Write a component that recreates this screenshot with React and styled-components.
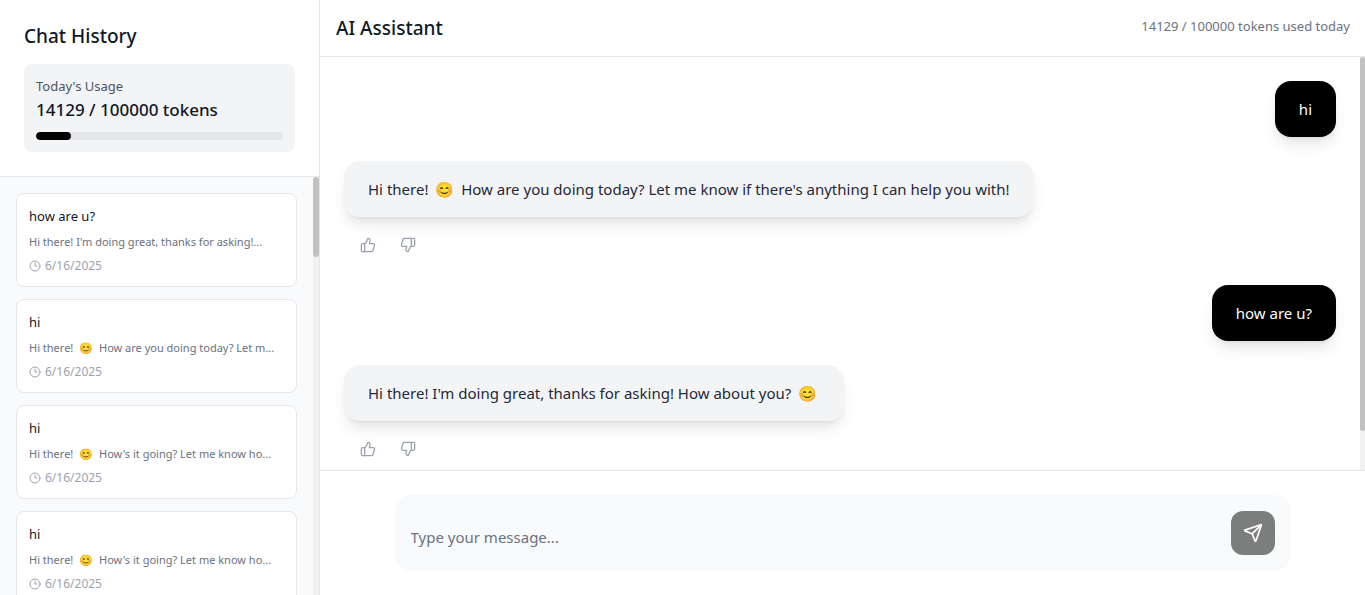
import React from "react";
import styled, { createGlobalStyle } from "styled-components";
import { Clock3, Send, ThumbsDown, ThumbsUp } from "lucide-react";

const GlobalStyle = createGlobalStyle`
  *, *::before, *::after { box-sizing: border-box; }
  body {
    margin: 0;
    background: #fff;
    color: #111827;
    font-family: "Segoe UI", "Noto Sans", "Open Sans", sans-serif;
    font-size: 15px;
  }
  h1, h2, h3, p, ul { margin: 0; padding: 0; }
  button, textarea { font: inherit; border: 0; background: none; padding: 0; }
`;

const Layout = styled.div`
  display: flex;
  height: 100vh;
  overflow: hidden;
`;

const Sidebar = styled.aside`
  display: flex;
  flex-direction: column;
  flex: 0 0 320px;
  min-height: 0;
  border-right: 1px solid #e5e7eb;
  background: #f9fafb;
`;

const SidebarHeader = styled.header`
  flex: none;
  padding: 24px;
  background: #fff;
  border-bottom: 1px solid #e5e7eb;
`;

const Title = styled.h2`
  font-size: 19px;
  font-weight: 500;
  line-height: 24px;
`;

const UsageCard = styled.section`
  margin-top: 16px;
  padding: 12px;
  border-radius: 8px;
  background: #f3f4f6;
`;

const UsageLabel = styled.p`
  color: #4b5563;
  font-size: 13px;
  line-height: 20px;
`;

const UsageValue = styled.p`
  font-size: 17px;
  font-weight: 500;
  line-height: 28px;
`;

const Meter = styled.div`
  height: 8px;
  margin-top: 8px;
  border-radius: 4px;
  background: #e5e7eb;
  overflow: hidden;
`;

const MeterFill = styled.div`
  height: 100%;
  border-radius: 4px;
  background: #000;
`;

const ScrollArea = styled.div`
  display: flex;
  flex: 1;
  min-height: 0;
  overflow: hidden;
`;

const ScrollTrack = styled.div`
  flex: 0 0 ${(p) => p.$width}px;
  background: #f1f1f1;
`;

const ScrollThumb = styled.div`
  height: ${(p) => p.$height};
  border-radius: 3px;
  background: #c1c1c1;
`;

const HistoryList = styled.ul`
  display: flex;
  flex: 1;
  flex-direction: column;
  gap: 12px;
  min-width: 0;
  padding: 16px;
  list-style: none;
`;

const HistoryCard = styled.button`
  display: flex;
  flex-direction: column;
  gap: 8px;
  width: 100%;
  padding: 12px;
  border: 1px solid #e5e7eb;
  border-radius: 8px;
  background: #fff;
  text-align: left;
  cursor: pointer;
`;

const HistoryTitle = styled.span`
  color: #111827;
  font-size: 13px;
  line-height: 20px;
`;

const HistoryPreview = styled.span`
  width: 100%;
  overflow: hidden;
  color: #6b7280;
  font-size: 11px;
  line-height: 16px;
  text-overflow: ellipsis;
  white-space: nowrap;
`;

const HistoryDate = styled.span`
  display: flex;
  align-items: center;
  gap: 4px;
  color: #9ca3af;
  font-size: 12px;
  line-height: 16px;
`;

const Emoji = styled.span`
  margin: 0 3px;
`;

const Main = styled.main`
  display: flex;
  flex: 1;
  flex-direction: column;
  min-width: 0;
`;

const MainHeader = styled.header`
  display: flex;
  flex: none;
  align-items: flex-start;
  justify-content: space-between;
  padding: 16px 15px 16px 16px;
  border-bottom: 1px solid #e5e7eb;
`;

const TokenCount = styled.span`
  color: #6b7280;
  font-size: 13px;
  line-height: 20px;
`;

const Messages = styled.div`
  display: flex;
  flex: 1;
  flex-direction: column;
  gap: 24px;
  min-width: 0;
  padding: 24px;
`;

const Message = styled.div`
  display: flex;
  flex-direction: column;
  align-items: ${(p) => (p.$own ? "flex-end" : "flex-start")};
`;

const Bubble = styled.p`
  padding: 16px 24px;
  border-radius: 16px;
  background: ${(p) => (p.$own ? "#000" : "#f3f4f6")};
  color: ${(p) => (p.$own ? "#fff" : "#1f2937")};
  line-height: 24px;
  box-shadow: 0 10px 15px -3px rgba(0, 0, 0, 0.1), 0 4px 6px -4px rgba(0, 0, 0, 0.1);
`;

const Feedback = styled.div`
  display: flex;
  gap: 8px;
  padding: 12px 8px 0;
`;

const FeedbackButton = styled.button`
  display: flex;
  padding: 8px;
  border-radius: 8px;
  color: #9ca3af;
  cursor: pointer;
`;

const ComposerBar = styled.footer`
  flex: none;
  padding: 24px;
  border-top: 1px solid #e5e7eb;
`;

const Composer = styled.form`
  display: flex;
  gap: 16px;
  max-width: 896px;
  margin: 0 auto;
  padding: 16px;
  border-radius: 16px;
  background: #f9fafb;
`;

const MessageInput = styled.textarea`
  flex: 1;
  height: 44px;
  padding: 14px 0 0;
  color: #111827;
  line-height: 24px;
  outline: none;
  overflow: hidden;
  resize: none;
  &::placeholder { color: #6b7280; opacity: 1; }
`;

const SendButton = styled.button`
  display: flex;
  align-items: center;
  justify-content: center;
  width: 44px;
  height: 44px;
  border-radius: 12px;
  background: #7c7d7d;
  color: #fff;
`;

const USED = 14129;
const LIMIT = 100000;

const history = [
  { title: "how are u?", preview: "Hi there! I'm doing great, thanks for asking!..." },
  { title: "hi", preview: "Hi there! 😊 How are you doing today? Let m..." },
  { title: "hi", preview: "Hi there! 😊 How's it going? Let me know ho..." },
  { title: "hi", preview: "Hi there! 😊 How's it going? Let me know ho..." },
];

const messages = [
  { own: true, text: "hi" },
  { own: false, text: "Hi there! 😊 How are you doing today? Let me know if there's anything I can help you with!" },
  { own: true, text: "how are u?" },
  { own: false, text: "Hi there! I'm doing great, thanks for asking! How about you? 😊" },
];

function RichText({ text }) {
  return text
    .split(/(😊)/u)
    .map((part, i) => (part === "😊" ? <Emoji key={i}>{part}</Emoji> : part));
}

function Scrollbar({ width, height }) {
  return (
    <ScrollTrack $width={width} aria-hidden="true">
      <ScrollThumb $height={height} />
    </ScrollTrack>
  );
}

export default function App() {
  return (
    <>
      <GlobalStyle />
      <Layout>
        <Sidebar>
          <SidebarHeader>
            <Title>Chat History</Title>
            <UsageCard>
              <UsageLabel>Today's Usage</UsageLabel>
              <UsageValue>{USED} / {LIMIT} tokens</UsageValue>
              <Meter>
                <MeterFill style={{ width: `${(USED / LIMIT) * 100}%` }} />
              </Meter>
            </UsageCard>
          </SidebarHeader>
          <ScrollArea>
            <HistoryList>
              {history.map((item, i) => (
                <li key={i}>
                  <HistoryCard type="button">
                    <HistoryTitle>{item.title}</HistoryTitle>
                    <HistoryPreview><RichText text={item.preview} /></HistoryPreview>
                    <HistoryDate>
                      <Clock3 size={12} />
                      6/16/2025
                    </HistoryDate>
                  </HistoryCard>
                </li>
              ))}
            </HistoryList>
            <Scrollbar width={6} height="80px" />
          </ScrollArea>
        </Sidebar>
        <Main>
          <MainHeader>
            <Title as="h1">AI Assistant</Title>
            <TokenCount>{USED} / {LIMIT} tokens used today</TokenCount>
          </MainHeader>
          <ScrollArea>
            <Messages>
              {messages.map((message, i) => (
                <Message key={i} $own={message.own}>
                  <Bubble $own={message.own}><RichText text={message.text} /></Bubble>
                  {!message.own && (
                    <Feedback>
                      <FeedbackButton type="button" aria-label="Good response">
                        <ThumbsUp size={16} />
                      </FeedbackButton>
                      <FeedbackButton type="button" aria-label="Bad response">
                        <ThumbsDown size={16} />
                      </FeedbackButton>
                    </Feedback>
                  )}
                </Message>
              ))}
            </Messages>
            <Scrollbar width={5} height="90.6%" />
          </ScrollArea>
          <ComposerBar>
            <Composer onSubmit={(e) => e.preventDefault()}>
              <MessageInput rows={1} aria-label="Message" placeholder="Type your message..." />
              <SendButton type="submit" aria-label="Send message">
                <Send size={20} />
              </SendButton>
            </Composer>
          </ComposerBar>
        </Main>
      </Layout>
    </>
  );
}
